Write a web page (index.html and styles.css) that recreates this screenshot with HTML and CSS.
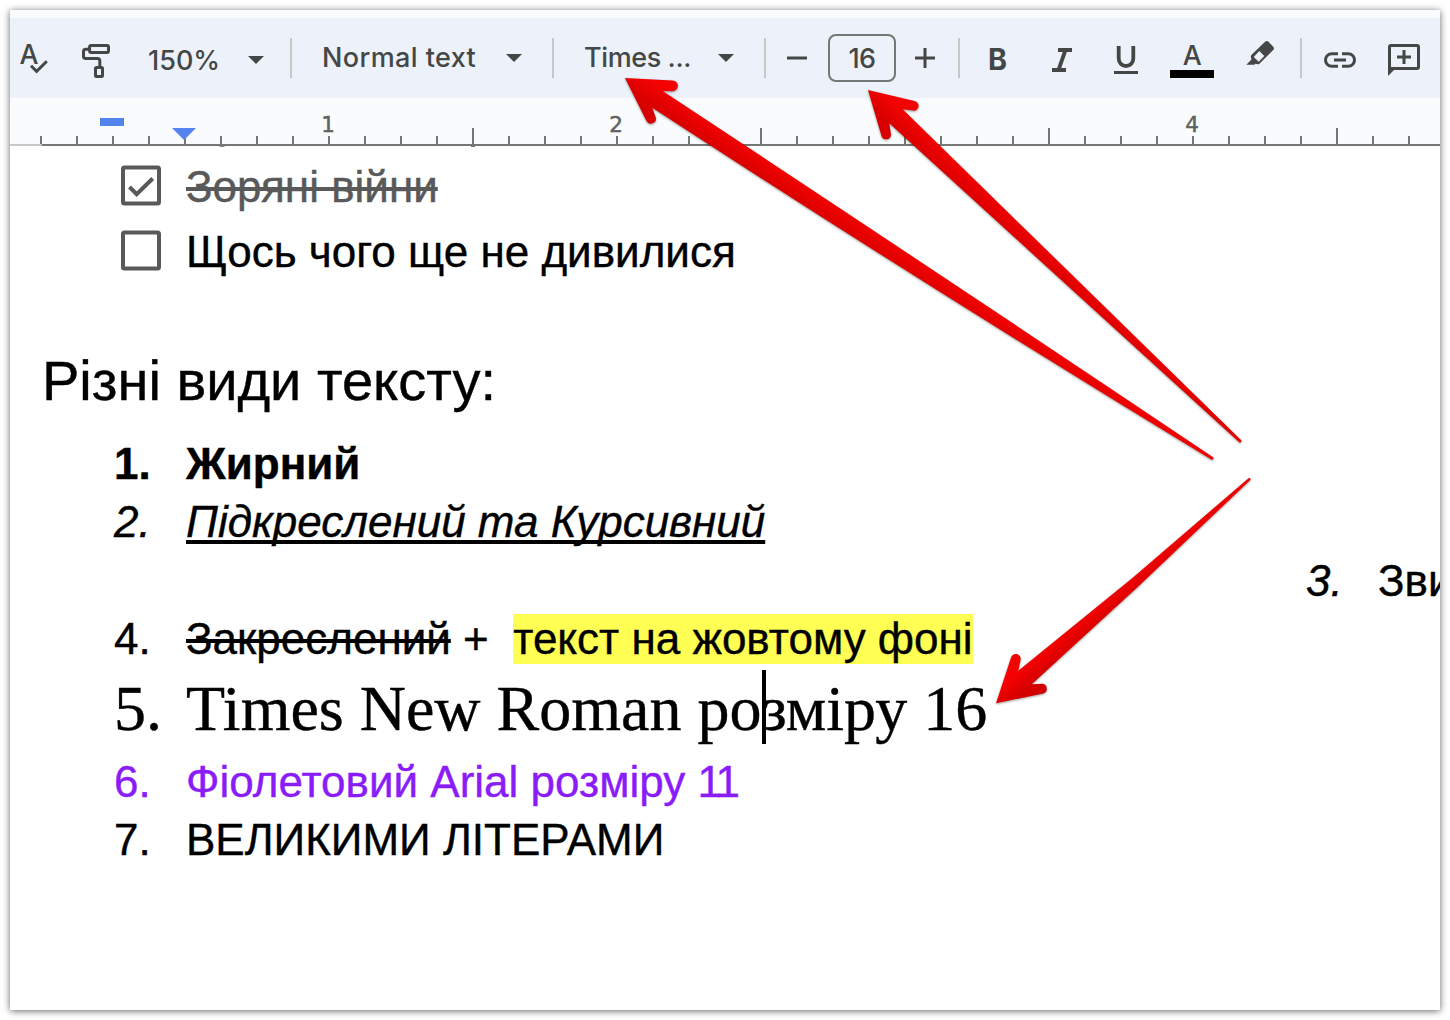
FILE: index.html
```html
<!DOCTYPE html>
<html lang="uk">
<head>
<meta charset="utf-8">
<title>Різні види тексту</title>
<link rel="stylesheet" href="styles.css">
</head>
<body>
<div class="window">
  <div class="toolbar">
    <svg class="icon" width="60" height="80" viewBox="10 18 60 80">
      <text class="glyph" x="19.500" y="64" font-size="27" textLength="19" lengthAdjust="spacingAndGlyphs">A</text>
      <path class="line" d="M31 65.700l5.600 5.600 10.200-10"/>
    </svg>
    <svg class="icon" width="60" height="80" viewBox="70 18 60 80">
      <rect class="line" x="89.600" y="45.500" width="18.900" height="6.900" rx="1.500"/>
      <path class="line" d="M89 49.200h-3.200q-2.300 0-2.300 2.300v4.700q0 2.300 2.300 2.300h11.700q2.300 0 2.300 2.300V67"/>
      <rect class="line" x="95.500" y="67.500" width="7" height="9" rx="1"/>
    </svg>
    <div class="select zoom"><span class="label">150%</span><span class="caret"></span></div>
    <div class="divider"></div>
    <div class="select style"><span class="label">Normal text</span><span class="caret"></span></div>
    <div class="divider"></div>
    <div class="select font"><span class="label">Times ...</span><span class="caret"></span></div>
    <div class="divider"></div>
    <svg class="icon" width="62" height="80" viewBox="766 18 62 80"><path class="line" d="M787 58h20"/></svg>
    <div class="size">16</div>
    <svg class="icon" width="62" height="80" viewBox="896 18 62 80"><path class="line" d="M915 58h20M925 48v20"/></svg>
    <div class="divider"></div>
    <svg class="icon" width="70" height="80" viewBox="960 18 70 80"><text class="glyph bold" x="988" y="70" font-size="29.500" textLength="19" lengthAdjust="spacingAndGlyphs">B</text></svg>
    <svg class="icon" width="65" height="80" viewBox="1030 18 65 80"><path class="line thick" d="M1058 50h14M1052 70h14M1065.500 50l-7 20"/></svg>
    <svg class="icon" width="65" height="80" viewBox="1095 18 65 80"><path class="line thick" d="M1118.700 46v12.500a7.300 7.500 0 0 0 14.600 0V46"/><path class="line" d="M1114 72.500h24"/></svg>
    <svg class="icon" width="65" height="80" viewBox="1160 18 65 80"><text class="glyph" x="1182.700" y="65" font-size="27" textLength="19" lengthAdjust="spacingAndGlyphs">A</text><rect x="1170" y="70" width="44" height="8"/></svg>
    <svg class="icon" width="75" height="80" viewBox="1225 18 75 80"><path class="solid" fill-rule="evenodd" d="M1246.300 64.800l5.200-5.300-.6-2q-.4-1.700.9-2.900l13.300-12.800q1.700-1.500 3.400 0l4.700 4.900q1.500 1.700 0 3.400l-13.500 13.300q-1.200 1.200-2.800.7l-1.600-.4-.9 1.100zM1253.700 57l5 4.700 5.600-5.700-5-5z"/></svg>
    <div class="divider"></div>
    <svg class="icon" width="70" height="80" viewBox="1302 18 70 80"><path class="line" d="M1338 53.700h-6.200a6.300 6.300 0 0 0 0 12.600h6.200M1342 53.700h6.200a6.300 6.300 0 0 1 0 12.600H1342M1334 60h12"/></svg>
    <svg class="icon" width="68" height="80" viewBox="1372 18 68 80"><path class="line" d="M1389.500 71V47q0-1.500 1.500-1.500h26q1.500 0 1.500 1.500v20q0 1.500-1.500 1.500h-26M1397 57h14M1404 50v14"/><path class="solid" d="M1388 67v9l6.500-6.500z"/></svg>
  </div>

  <svg class="ruler" width="1430" height="50" viewBox="10 98 1430 50">
    <defs>
      <pattern id="minor" x="40" y="136" width="36" height="8" patternUnits="userSpaceOnUse"><rect class="tick" width="2" height="8"/></pattern>
      <pattern id="major" x="472" y="128" width="288" height="16" patternUnits="userSpaceOnUse"><rect class="tick" width="2" height="16"/></pattern>
    </defs>
    <rect x="40" y="136" width="1400" height="8" fill="url(#minor)"/>
    <rect x="472" y="128" width="968" height="16" fill="url(#major)"/>
    <rect class="margin" x="10" y="144" width="32" height="2"/>
    <rect class="tick" x="42" y="144" width="1398" height="2"/>
    <path class="tick" d="M218.500 146h7q-3.500 2-7 0M471 146h4v1h-4z"/>
    <text x="328" y="132">1</text><text x="616" y="132">2</text><text x="904" y="132">3</text><text x="1192" y="132">4</text>
    <rect class="marker" x="100" y="118" width="24" height="8"/>
    <path class="marker" d="M172 128h24l-12 12z"/>
  </svg>

  <div class="page">
    <div class="check done">
      <svg class="box" width="76" height="65" viewBox="110 154 76 65"><rect x="123" y="167.500" width="36" height="36" rx="1.500"/><path d="M129.500 187l7.200 7.200 16-15.700"/></svg>
      <span class="text">Зоряні війни</span>
    </div>
    <div class="check">
      <svg class="box" width="76" height="65" viewBox="110 219 76 65"><rect x="123" y="232.500" width="36" height="36" rx="1.500"/></svg>
      <span class="text">Щось чого ще не дивилися</span>
    </div>
    <h2 class="heading">Різні види тексту:</h2>
    <div class="list">
      <div class="item strong"><span class="num">1.</span><span>Жирний</span></div>
      <div class="item italic"><span class="num">2.</span><span class="under">Підкреслений та Курсивний</span></div>
      <div class="item far"><span class="num italic">3.</span><span>Зви</span></div>
      <div class="item"><span class="num">4.</span><span><s>Закреслений</s> +&nbsp; <mark>текст на жовтому фоні</mark></span></div>
      <div class="item serif"><span class="num">5.</span><span>Times New Roman ро<i class="cursor"></i>зміру 16</span></div>
      <div class="item violet"><span class="num">6.</span><span>Фіолетовий Arial розміру <span class="tight">11</span></span></div>
      <div class="item"><span class="num">7.</span><span>ВЕЛИКИМИ ЛІТЕРАМИ</span></div>
    </div>
  </div>

  <svg class="arrows" width="1430" height="1000" viewBox="10 10 1430 1000">
    <defs>
      <linearGradient id="g1" gradientUnits="userSpaceOnUse" x1="667" y1="91" x2="655" y2="109"><stop offset="0" stop-color="#f40202"/><stop offset="1" stop-color="#d80000"/></linearGradient>
      <linearGradient id="g2" gradientUnits="userSpaceOnUse" x1="905" y1="111" x2="891" y2="126"><stop offset="0" stop-color="#f40202"/><stop offset="1" stop-color="#d80000"/></linearGradient>
      <linearGradient id="g3" gradientUnits="userSpaceOnUse" x1="1019" y1="672" x2="1031" y2="686"><stop offset="0" stop-color="#f40202"/><stop offset="1" stop-color="#d40000"/></linearGradient>
    </defs>
    <path fill="url(#g1)" d="M625 78l47.500 2.400a5.300 5.300 0 0 1 0 10.800l-9.800-.2Q940 274 1212.800 457a1.400 1.400 0 0 1-1.500 2.400Q927 287 652.300 107.700l3.500 10a5 5 0 0 1-9.300 3.300z"/>
    <path fill="url(#g2)" d="M868 90l46.500 11a4.800 4.800 0 0 1-1.500 9.600l-10.300-1.300L1241 440a1.400 1.400 0 0 1-2 2L889.300 123.300l1.700 11.200a4.900 4.900 0 0 1-9.500 1.600z"/>
    <path fill="url(#g3)" d="M996 703.300l15-45.600a4.900 4.900 0 0 1 9.600 1.900l-2.300 11.100L1133 577.500 1248.500 478.200a1.300 1.300 0 0 1 1.800 1.800L1137.700 587 1031.700 684.300l9.800-.5a4.900 4.900 0 0 1 1.700 9.600z"/>
  </svg>
</div>
</body>
</html>
```
FILE: styles.css
```css
* { box-sizing: border-box; }
body { margin: 0; padding: 10px; height: 1020px; overflow: hidden; background: #fff; font-family: "Liberation Sans", Arial, sans-serif; }
.window { position: relative; width: 1430px; height: 1000px; padding-top: 8px; background: #f9fbfd; box-shadow: 0 1px 7px rgba(0,0,0,.6); }
svg { display: block; flex: none; }

.toolbar { display: flex; align-items: center; height: 80px; background: #edf2fa; color: #444746; font-family: Inter, Roboto, sans-serif; }
.glyph { fill: #444746; font-family: Inter, Roboto, sans-serif; font-weight: 500; }
.bold { font-weight: 700; }
.line { fill: none; stroke: #444746; stroke-width: 3; }
.thick { stroke-width: 3.8; }
.solid { fill: #444746; }
.divider { flex: none; width: 2px; height: 40px; background: #c7c7c7; }
.select { display: flex; flex: none; align-items: center; justify-content: space-between; font-size: 27px; font-weight: 500; line-height: 40px; white-space: pre; }
.caret { border: 8px solid transparent; border-top-color: #444746; border-bottom: 0; }
.zoom { width: 160px; padding: 4px 26px 0 18px; }
.zoom .label { padding-top: 1px; }
.style { width: 260px; padding: 0 30px 0 30px; letter-spacing: .4px; }
.font { width: 210px; padding: 0 30px 0 30px; letter-spacing: -.4px; }
.size { flex: none; width: 68px; height: 48px; border: 2px solid #747775; border-radius: 8px; font-size: 27px; font-weight: 500; line-height: 45px; letter-spacing: -.5px; text-align: center; }

.ruler { margin-bottom: -2px; position: relative; }
.ruler text { fill: #5f6162; stroke: #5f6162; stroke-width: .5px; font-family: "DejaVu Sans", sans-serif; font-size: 21.5px; text-anchor: middle; }
.tick { fill: #747775; }
.margin { fill: #c7c7c7; }
.marker { fill: #5383ec; }

.page { height: 864px; padding: 8px 0 0 30px; overflow: hidden; background: #fff; color: #000; font-size: 44px; white-space: nowrap; -webkit-text-stroke: .4px currentColor; }
.check { display: flex; height: 65px; padding-left: 70px; line-height: 65px; }
.box { fill: none; stroke: #595959; stroke-width: 4; }
.done { color: #595959; }
.done .text, s { text-decoration: line-through; text-decoration-thickness: 4px; }
.heading { margin: 65px 0 0 2px; height: 86px; font-size: 56px; font-weight: 400; line-height: 64px; }
.list { padding-left: 74px; }
.item { display: flex; height: 58.4px; line-height: 58.4px; }
.num { flex: none; width: 72px; }
.strong { font-weight: 700; }
.italic { font-style: italic; }
.under { text-decoration: underline; text-decoration-thickness: 4px; text-underline-offset: 3px; text-decoration-skip-ink: none; }
.far { padding-left: 1192px; }
mark { padding-bottom: 1px; background: #ffff54; color: #000; }
.serif { height: 84px; font-family: "Liberation Serif", "Times New Roman", serif; font-size: 64px; line-height: 80px; }
.cursor { display: inline-block; width: 4px; height: 74px; margin: 0 -5px 0 1px; vertical-align: -14px; background: #000; }
.violet { color: #8a1cf8; }
.tight { letter-spacing: -3.2px; }
.arrows { position: absolute; left: 0; top: 0; filter: drop-shadow(0 1px 1px rgba(0,0,0,.4)); }
```
